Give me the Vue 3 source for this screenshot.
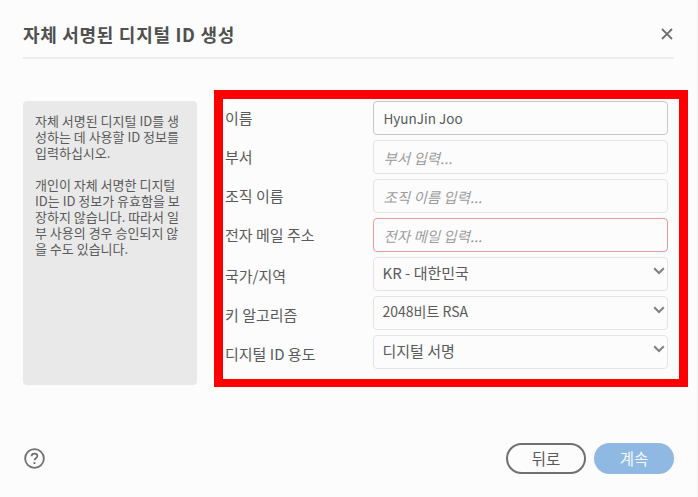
<script setup>
import { ref } from 'vue';

const description = ref([
  ['자체 서명된 디지털 ID를 생', '성하는 데 사용할 ID 정보를', '입력하십시오.'],
  ['개인이 자체 서명한 디지털', 'ID는 ID 정보가 유효함을 보', '장하지 않습니다. 따라서 일', '부 사용의 경우 승인되지 않', '을 수도 있습니다.']
]);

const fields = ref([
  { label: '이름', value: 'HyunJin Joo', kind: 'filled' },
  { label: '부서', placeholder: '부서 입력...', kind: 'empty' },
  { label: '조직 이름', placeholder: '조직 이름 입력...', kind: 'empty' },
  { label: '전자 메일 주소', placeholder: '전자 메일 입력...', kind: 'error' },
  { label: '국가/지역', value: 'KR - 대한민국', kind: 'select' },
  { label: '키 알고리즘', value: '2048비트 RSA', kind: 'select', tight: true },
  { label: '디지털 ID 용도', value: '디지털 서명', kind: 'select' }
]);
</script>

<template>
  <div class="dialog">
    <header class="head">
      <h1>자체 서명된 디지털 ID 생성</h1>
      <svg class="close" width="12" height="12" viewBox="0 0 12 12">
        <path d="M1 1 11 11M11 1 1 11" stroke="#707070" stroke-width="1.8" fill="none" />
      </svg>
    </header>

    <main class="body">
      <aside class="info">
        <p v-for="(para, i) in description" :key="i">
          <span v-for="line in para" :key="line">{{ line }}</span>
        </p>
      </aside>
      <form class="form">
        <div v-for="field in fields" :key="field.label" class="row" :class="field.kind">
          <label>{{ field.label }}</label>
          <div class="control">
            <span v-if="field.value" class="value" :class="{ tight: field.tight }">{{ field.value }}</span>
            <span v-else class="placeholder">{{ field.placeholder }}</span>
            <svg v-if="field.kind === 'select'" class="chevron" width="12" height="8" viewBox="0 0 12 8">
              <path d="M1.2 1.2 6 6 10.8 1.2" stroke="#808080" stroke-width="2" fill="none" />
            </svg>
          </div>
        </div>
      </form>
    </main>

    <footer class="foot">
      <svg class="help" width="21" height="21" viewBox="0 0 22 22">
        <circle cx="11" cy="11" r="9.8" stroke="#707070" stroke-width="1.9" fill="none" />
        <path d="M8 8.6C8 6.8 9.4 6 11 6s3 .9 3 2.5c0 2.2-3 2.2-3 4.4" stroke="#707070" stroke-width="1.8" fill="none" />
        <circle cx="11" cy="15.8" r="1.2" fill="#707070" />
      </svg>
      <div class="actions">
        <button type="button" class="back">뒤로</button>
        <button type="button" class="next">계속</button>
      </div>
    </footer>
  </div>
</template>

<style scoped>
.dialog {
  width: 698px;
  height: 497px;
  box-sizing: border-box;
  padding: 0 23px 0 23px;
  border-right: 1px solid #f1f1f1;
  display: flex;
  flex-direction: column;
  background: #fcfcfc;
  color: #5a5a5a;
  font-family: "Noto Sans CJK KR", "Noto Sans", sans-serif;
  font-size: 14px;
}

.head {
  height: 59px;
  box-sizing: border-box;
  border-bottom: 2px solid #ececec;
  display: flex;
  align-items: center;
  justify-content: space-between;
  padding: 10px 1px 0 0;
}

.head h1 {
  margin: 0;
  font-size: 18px;
  font-weight: 700;
  letter-spacing: 0.7px;
  color: #505050;
}

.body {
  display: flex;
  align-items: flex-start;
  gap: 17px;
  padding-top: 31px;
  margin-right: -14px;
}

.info {
  width: 174px;
  height: 284px;
  margin-top: 11px;
  box-sizing: border-box;
  padding: 12px 12px;
  background: #e9e9e9;
  border-radius: 4px;
  font-size: 13px;
  line-height: 16px;
}

.info p {
  margin: 0 0 16px;
}

.info span {
  display: block;
  white-space: nowrap;
}

.form {
  width: 474px;
  box-sizing: border-box;
  border: 9px solid #ff0000;
  border-bottom-width: 8px;
  padding: 2px 11px 10px 2px;
  display: flex;
  flex-direction: column;
  gap: 5px;
}

.row {
  display: flex;
  align-items: center;
  height: 34px;
}

.row label {
  width: 148px;
  flex-shrink: 0;
  font-size: 15px;
  padding-bottom: 2px;
}

.row.select label {
  padding-bottom: 0;
  padding-top: 2px;
}

.control {
  width: 295px;
  height: 34px;
  box-sizing: border-box;
  border: 1.5px solid #e4e4e4;
  border-radius: 4px;
  padding: 0 2px 0 9.5px;
  display: flex;
  align-items: center;
  justify-content: space-between;
}

.filled .control {
  border-color: #c8c8c8;
}

.error .control {
  border-color: #e69a9a;
}

.value {
  font-size: 13.5px;
  color: #5a5a5a;
}

.placeholder {
  font-size: 14.5px;
  font-style: italic;
  color: #9c9c9c;
}

.select .value {
  font-size: 15px;
  margin-bottom: 4px;
  margin-left: -1px;
}

.select .value.tight {
  font-size: 14px;
}

.chevron {
  margin-top: -6px;
}

.foot {
  margin-top: auto;
  height: 54px;
  display: flex;
  justify-content: space-between;
  align-items: flex-start;
}

.help {
  margin: 5px 0 0 1px;
}

.actions {
  display: flex;
  gap: 8px;
}

.actions button {
  width: 80px;
  height: 31px;
  border-radius: 16px;
  font-family: inherit;
  font-size: 15.5px;
  padding: 0 0 2px;
}

.back {
  background: #fcfcfc;
  border: 2px solid #707070;
  color: #5a5a5a;
}

.next {
  background: #8fb8e2;
  border: 0;
  color: #f4f8fc;
}
</style>

<style>
html, body {
  background: #fcfcfc;
}
</style>
